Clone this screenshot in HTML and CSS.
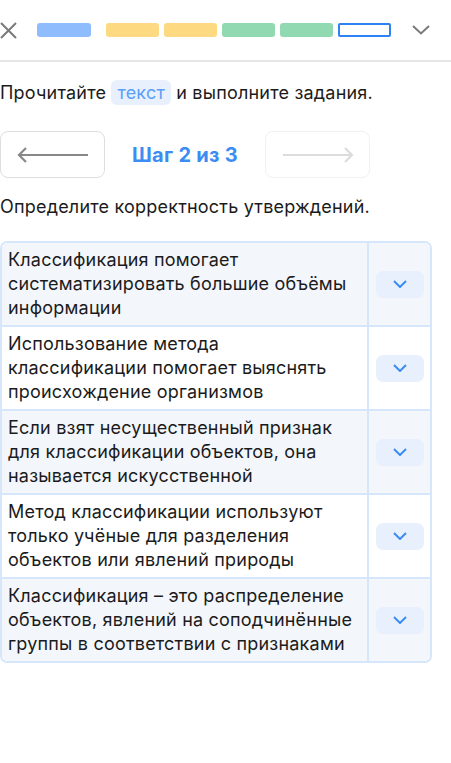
FILE: index.html
```html
<!DOCTYPE html>
<html lang="ru">
<head>
    <meta charset="UTF-8">
    <meta name="viewport" content="width=device-width, initial-scale=1.0">
    <title>Задание</title>
    <link rel="stylesheet" href="styles.css">
</head>
<body>
<header class="topbar">
    <button class="icon-btn close-btn" aria-label="Закрыть">
        <svg width="17" height="17" viewBox="0 0 17 17"><path d="M1 1 L16 16 M16 1 L1 16" stroke="#7a7a7a" stroke-width="2" fill="none"/></svg>
    </button>
    <div class="progress">
        <span class="segment segment-blue"></span>
        <span class="segment segment-yellow segment-gap"></span>
        <span class="segment segment-yellow"></span>
        <span class="segment segment-green"></span>
        <span class="segment segment-green"></span>
        <span class="segment segment-current"></span>
    </div>
    <button class="icon-btn more-btn" aria-label="Развернуть">
        <svg width="18" height="10" viewBox="0 0 18 10"><path d="M1 1 L9 8.5 L17 1" stroke="#7a7a7a" stroke-width="2" fill="none"/></svg>
    </button>
</header>

<main class="content">
    <p class="intro">Прочитайте <span class="chip">текст</span> и выполните задания.</p>

    <div class="steps">
        <button class="step-btn">
            <svg width="72" height="16" viewBox="0 0 72 16"><path d="M71 8 H2 M9 1 L2 8 L9 15" stroke="#888" stroke-width="2.2" fill="none"/></svg>
        </button>
        <span class="step-label">Шаг 2 из 3</span>
        <button class="step-btn step-btn-disabled">
            <svg width="72" height="16" viewBox="0 0 72 16"><path d="M1 8 H70 M63 1 L70 8 L63 15" stroke="#dcdcdc" stroke-width="2.2" fill="none"/></svg>
        </button>
    </div>

    <p class="question">Определите корректность утверждений.</p>

    <div class="statements">
        <div class="statement">
            <div class="statement-text">Классификация помогает систематизировать большие объёмы информации</div>
            <div class="statement-answer"><button class="select-btn"><svg width="14" height="8" viewBox="0 0 14 8"><path d="M1 1 L7 7 L13 1" stroke="#3b8cf3" stroke-width="2" fill="none"/></svg></button></div>
        </div>
        <div class="statement">
            <div class="statement-text">Использование метода классификации помогает выяснять происхождение организмов</div>
            <div class="statement-answer"><button class="select-btn"><svg width="14" height="8" viewBox="0 0 14 8"><path d="M1 1 L7 7 L13 1" stroke="#3b8cf3" stroke-width="2" fill="none"/></svg></button></div>
        </div>
        <div class="statement">
            <div class="statement-text">Если взят несущественный признак для классификации объектов, она называется искусственной</div>
            <div class="statement-answer"><button class="select-btn"><svg width="14" height="8" viewBox="0 0 14 8"><path d="M1 1 L7 7 L13 1" stroke="#3b8cf3" stroke-width="2" fill="none"/></svg></button></div>
        </div>
        <div class="statement">
            <div class="statement-text">Метод классификации используют только учёные для разделения объектов или явлений природы</div>
            <div class="statement-answer"><button class="select-btn"><svg width="14" height="8" viewBox="0 0 14 8"><path d="M1 1 L7 7 L13 1" stroke="#3b8cf3" stroke-width="2" fill="none"/></svg></button></div>
        </div>
        <div class="statement">
            <div class="statement-text">Классификация – это распределение объектов, явлений на соподчинённые группы в соответствии с признаками</div>
            <div class="statement-answer"><button class="select-btn"><svg width="14" height="8" viewBox="0 0 14 8"><path d="M1 1 L7 7 L13 1" stroke="#3b8cf3" stroke-width="2" fill="none"/></svg></button></div>
        </div>
    </div>
</main>
</body>
</html>
```

FILE: styles.css
```css
body {
    margin: 0;
    font-family: 'Inter', 'Noto Sans', sans-serif;
    color: #1b1b1b;
    background-color: #fff;
}

button {
    font-family: inherit;
    border: none;
    background: none;
    padding: 0;
    cursor: pointer;
}

.topbar {
    display: flex;
    align-items: center;
    height: 62px;
    border-bottom: 2px solid #e6e6e6;
    box-sizing: border-box;
    padding-bottom: 0;
}

.icon-btn {
    display: flex;
    align-items: center;
    justify-content: center;
}

.close-btn {
    width: 17px;
    height: 17px;
}

.progress {
    display: flex;
    align-items: center;
    gap: 4.5px;
    margin-left: 20px;
}

.segment {
    width: 53.5px;
    height: 14px;
    border-radius: 3px;
    box-sizing: border-box;
}

.segment-blue {
    background-color: #8ebcfd;
}

.segment-yellow {
    background-color: #fdda81;
}

.segment-green {
    background-color: #91d9b1;
}

.segment-current {
    border: 2px solid #2f82f4;
    border-radius: 2px;
}

.segment-gap {
    margin-left: 10.5px;
}

.more-btn {
    margin-left: 21px;
    width: 18px;
    height: 10px;
}

.intro {
    margin: 18px 0 0;
    font-size: 18px;
    letter-spacing: 0.2px;
    line-height: 26px;
}

.chip {
    display: inline-block;
    background-color: #e7f0fc;
    color: #5c9ff6;
    border-radius: 6px;
    padding: 0 6px;
    line-height: 25px;
}

.steps {
    display: flex;
    align-items: center;
    margin-top: 25px;
}

.step-btn {
    width: 105px;
    height: 47px;
    border: 1px solid #dedede;
    border-radius: 8px;
    display: flex;
    align-items: center;
    justify-content: center;
    box-sizing: border-box;
    background-color: #fff;
}

.step-btn-disabled {
    border-color: #f1f1f1;
}

.step-label {
    width: 160px;
    text-align: center;
    font-size: 20px;
    letter-spacing: 0.3px;
    font-weight: 700;
    color: #3b8cf3;
}

.question {
    margin: 16px 0 0;
    font-size: 18px;
    letter-spacing: 0.2px;
    line-height: 26px;
}

.statements {
    margin-top: 21px;
    width: 432px;
    border: 2px solid #d6e7fb;
    border-radius: 7px;
    box-sizing: border-box;
    overflow: hidden;
}

.statement {
    display: flex;
    min-height: 82px;
    border-top: 2px solid #d6e7fb;
}

.statement:first-child {
    border-top: none;
}

.statement:nth-child(odd) {
    background-color: #f3f6fb;
}

.statement-text {
    flex: 1;
    padding: 5px 8px 5px 6px;
    font-size: 18px;
    letter-spacing: 0.2px;
    line-height: 24px;
    border-right: 2px solid #d6e7fb;
}

.statement-answer {
    width: 61px;
    display: flex;
    align-items: center;
    justify-content: center;
}

.select-btn {
    width: 48px;
    height: 27px;
    border-radius: 7px;
    background-color: #e7f0fc;
    display: flex;
    align-items: center;
    justify-content: center;
}
```
